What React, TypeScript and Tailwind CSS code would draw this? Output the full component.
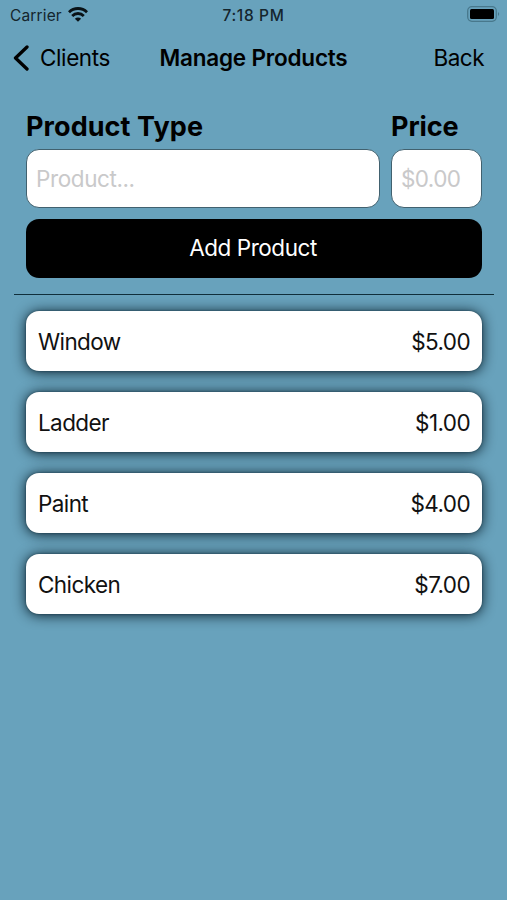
const items = [
  { name: 'Window', price: '$5.00' },
  { name: 'Ladder', price: '$1.00' },
  { name: 'Paint', price: '$4.00' },
  { name: 'Chicken', price: '$7.00' },
];

function StatusBar() {
  return (
    <div className="grid h-[30px] grid-cols-3 items-center px-[7px] text-[15.5px] text-[#14252d]">
      <div className="flex items-center gap-[6px] pl-[3px]">
        <span className="pt-px tracking-[0.15px]">Carrier</span>
        <svg className="mb-px" width="20" height="15" viewBox="0 0 20 15" fill="none" stroke="#091216" strokeWidth="2.800">
          <path d="M1 5.200a12.800 12.800 0 0 1 18 0" />
          <path d="M4.200 8.900a8.200 8.200 0 0 1 11.600 0" />
          <path d="M10 14.800 6.900 11.700a4.400 4.400 0 0 1 6.200 0Z" fill="#091216" stroke="none" />
        </svg>
      </div>
      <div className="pt-px text-center font-medium tracking-[0.65px] whitespace-nowrap">7:18 PM</div>
      <svg className="mb-[2px] justify-self-end" width="33" height="16" viewBox="0 0 33 16">
        <rect x="0.700" y="0.700" width="28.600" height="14.600" rx="4.200" fill="none" stroke="#48788c" strokeWidth="1.300" />
        <rect x="3" y="3" width="24" height="10" rx="1.500" fill="#000" />
        <path d="M31 6c1.600 1 1.600 3 0 4Z" fill="#48788c" />
      </svg>
    </div>
  );
}

export default function App() {
  return (
    <main className="h-[900px] w-[507px] overflow-hidden bg-[#68a2bc] font-['Inter','Liberation_Sans',sans-serif] text-black">
      <StatusBar />
      <header className="grid h-[56px] grid-cols-[1fr_auto_1fr] items-center px-[13px] text-[22.5px]">
        <button className="flex items-center gap-[11px]">
          <svg width="16" height="26" viewBox="0 0 16 26" fill="none" stroke="#000" strokeWidth="3.300" strokeLinecap="round" strokeLinejoin="round">
            <path d="M14 2 2.500 13 14 24" />
          </svg>
          <span className="tracking-[-0.4px]">Clients</span>
        </button>
        <h1 className="font-semibold tracking-[-0.2px]">Manage Products</h1>
        <button className="mr-[10px] justify-self-end tracking-[-0.5px]">Back</button>
      </header>
      <form className="grid grid-cols-[354px_91px] gap-x-[11px] pl-[26px] pt-[23px]">
        <label htmlFor="product" className="h-[40px] pt-px text-[27px] leading-[34px] font-bold tracking-[0.08px]">Product Type</label>
        <label htmlFor="price" className="h-[40px] pt-px text-[27px] leading-[34px] font-bold tracking-[-0.1px]">Price</label>
        <input id="product" placeholder="Product..." className="h-[59px] min-w-0 rounded-[13px] border border-[#41616f] bg-white px-[9px] text-[22.5px] tracking-[-0.4px] outline-none placeholder:text-[#c9c9ca]" />
        <input id="price" placeholder="$0.00" className="h-[59px] min-w-0 rounded-[13px] border border-[#41616f] bg-white px-[9px] text-[22.5px] tracking-[-0.6px] outline-none placeholder:text-[#c9c9ca]" />
        <button type="button" className="col-span-2 mt-[11px] h-[59px] rounded-[13px] bg-black pr-[2px] pb-[2px] text-[22.5px] tracking-[-0.45px] text-white">Add Product</button>
      </form>
      <hr className="ml-[14px] mr-[13px] mt-[16px] border-t border-[#102f3b]" />
      <ul className="mt-[16px] flex flex-col gap-[21px] pl-[26px] pr-[25px]">
        {items.map((item) => (
          <li key={item.name} className="flex h-[60px] items-center justify-between rounded-[13px] bg-white px-[12px] pt-px text-[22.5px] tracking-[-0.6px] text-[#111] shadow-[0_0_2px_rgba(0,30,45,0.6),0_1px_13px_rgba(0,20,30,0.95)]">
            <span>{item.name}</span>
            <span>{item.price}</span>
          </li>
        ))}
      </ul>
    </main>
  );
}
